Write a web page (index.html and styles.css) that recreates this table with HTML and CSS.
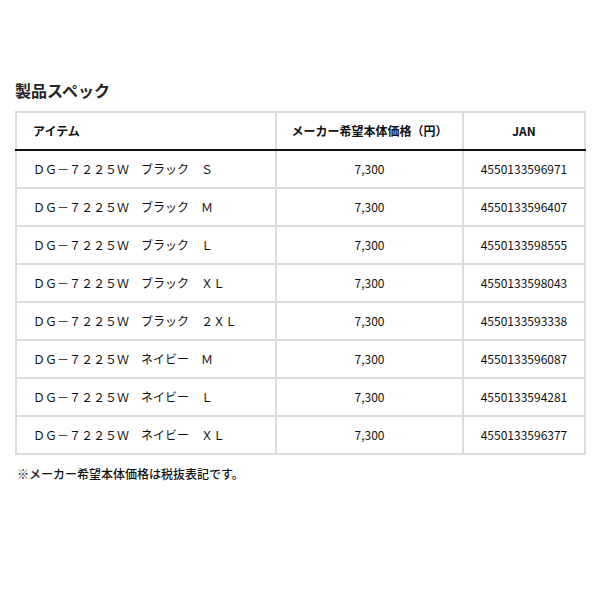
FILE: index.html
```html
<!DOCTYPE html>
<html lang="ja">
<head>
<meta charset="utf-8">
<link rel="stylesheet" href="styles.css">
</head>
<body>
<div class="page">
  <h2 class="title">製品スペック</h2>
  <table class="spec">
    <colgroup>
      <col class="c1"><col class="c2"><col class="c3">
    </colgroup>
    <thead>
      <tr><th class="left">アイテム</th><th>メーカー希望本体価格（円）</th><th>JAN</th></tr>
    </thead>
    <tbody>
      <tr><td class="left">ＤＧ－７２２５Ｗ　ブラック　Ｓ</td><td>7,300</td><td>4550133596971</td></tr>
      <tr><td class="left">ＤＧ－７２２５Ｗ　ブラック　Ｍ</td><td>7,300</td><td>4550133596407</td></tr>
      <tr><td class="left">ＤＧ－７２２５Ｗ　ブラック　Ｌ</td><td>7,300</td><td>4550133598555</td></tr>
      <tr><td class="left">ＤＧ－７２２５Ｗ　ブラック　ＸＬ</td><td>7,300</td><td>4550133598043</td></tr>
      <tr><td class="left">ＤＧ－７２２５Ｗ　ブラック　２ＸＬ</td><td>7,300</td><td>4550133593338</td></tr>
      <tr><td class="left">ＤＧ－７２２５Ｗ　ネイビー　Ｍ</td><td>7,300</td><td>4550133596087</td></tr>
      <tr><td class="left">ＤＧ－７２２５Ｗ　ネイビー　Ｌ</td><td>7,300</td><td>4550133594281</td></tr>
      <tr><td class="left">ＤＧ－７２２５Ｗ　ネイビー　ＸＬ</td><td>7,300</td><td>4550133596377</td></tr>
    </tbody>
  </table>
  <p class="note">※メーカー希望本体価格は税抜表記です。</p>
</div>
</body>
</html>
```
FILE: styles.css
```css
html, body {
  margin: 0;
  padding: 0;
  background: #fff;
}
body {
  font-family: "Noto Sans CJK JP", "Noto Sans", sans-serif;
  color: #111;
}
.page {
  padding: 80px 16px 0 15px;
}
.title {
  margin: 0 0 11px 0;
  font-size: 16px;
  line-height: 20px;
  font-weight: 700;
  color: #222;
}
.spec {
  width: 569px;
  border-collapse: collapse;
  table-layout: fixed;
  border: 2px solid #dcdcdc;
}
.c1 { width: 260px; }
.c2 { width: 187px; }
.c3 { width: 122px; }
.spec th, .spec td {
  border: 2px solid #dcdcdc;
  padding: 0 0 1px 0;
  font-size: 12px;
  text-align: center;
  vertical-align: middle;
  box-sizing: border-box;
}
.spec th {
  font-weight: 700;
  border-bottom: 2px solid #111;
  height: 38px;
}
.spec td {
  height: 38px;
  font-weight: 400;
}
.spec .left {
  text-align: left;
  padding-left: 16px;
}
.note {
  margin: 10px 0 0 2px;
  font-size: 12px;
  line-height: 18px;
  font-weight: 500;
}
```
